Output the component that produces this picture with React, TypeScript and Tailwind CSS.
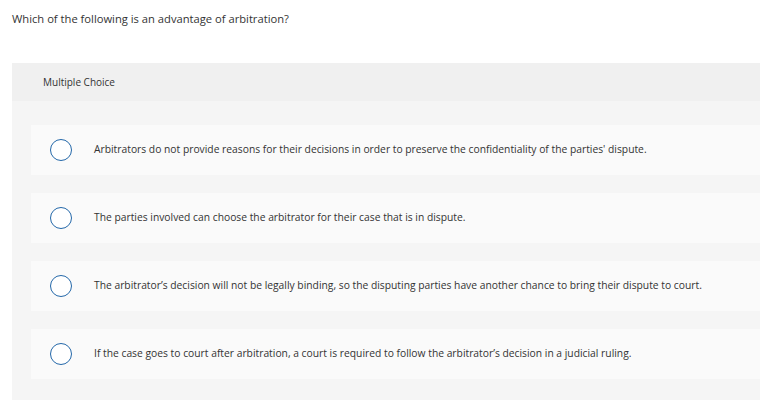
const options = [
  "Arbitrators do not provide reasons for their decisions in order to preserve the confidentiality of the parties' dispute.",
  'The parties involved can choose the arbitrator for their case that is in dispute.',
  'The arbitrator\u2019s decision will not be legally binding, so the disputing parties have another chance to bring their dispute to court.',
  'If the case goes to court after arbitration, a court is required to follow the arbitrator\u2019s decision in a judicial ruling.',
];

export default function App() {
  return (
    <div className="h-[400px] w-[760px] overflow-hidden bg-white font-['Open_Sans','Liberation_Sans',sans-serif] text-[#333]">
      <p className="px-3 pt-[11px] text-[11.2px] leading-[15px]">
        Which of the following is an advantage of arbitration?
      </p>
      <div className="ml-3 mt-[37px]">
        <div className="flex h-[38px] items-center bg-[#f0f0f0] pl-[31px] text-[10px]">
          Multiple Choice
        </div>
        <div className="flex flex-col gap-[18px] bg-[#f5f5f5] pb-[24px] pl-[19px] pt-[24px]">
          {options.map((text) => (
            <label
              key={text}
              className="flex h-[50px] items-center bg-[#fafafa] pl-[19px] text-[10.3px]"
            >
              <span className="h-[22px] w-[22px] shrink-0 rounded-full border-[1.5px] border-[#2468a9] bg-white" />
              <span className="ml-[22px]">{text}</span>
            </label>
          ))}
        </div>
      </div>
    </div>
  );
}
